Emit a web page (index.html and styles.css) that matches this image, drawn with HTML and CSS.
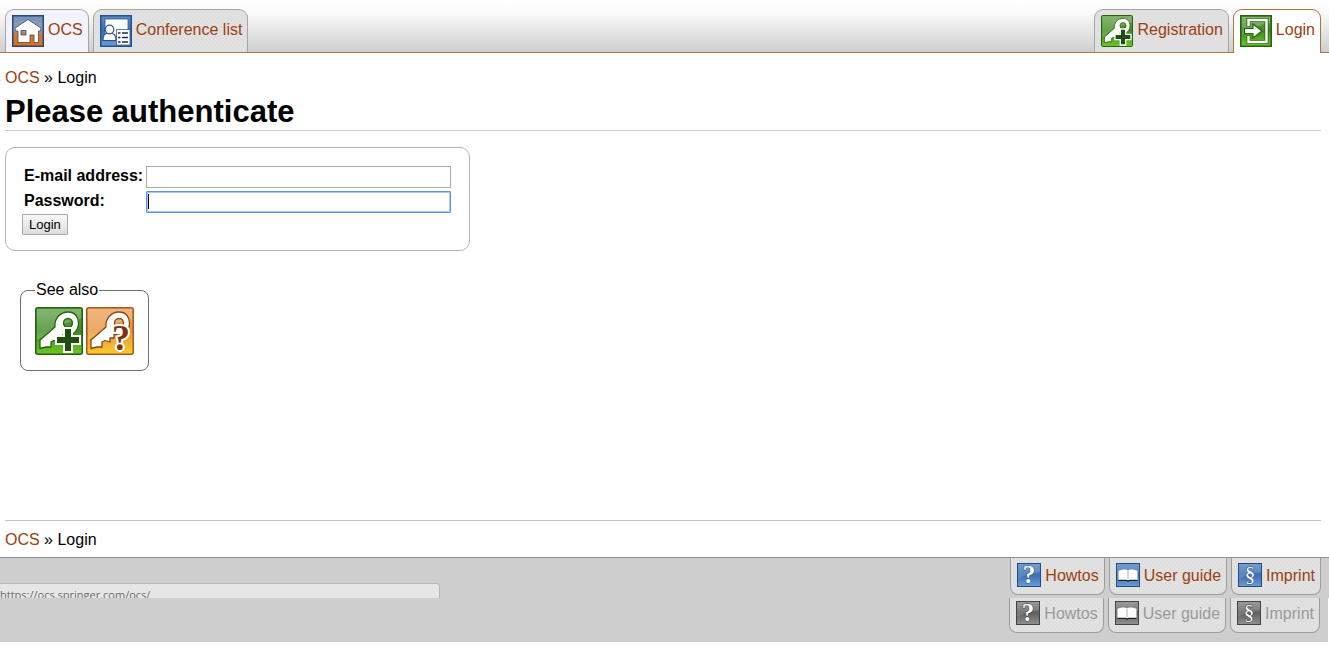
FILE: index.html
```html
<!DOCTYPE html>
<html lang="en">
<head>
<meta charset="utf-8">
<title>OCS - Login</title>
<link rel="stylesheet" href="styles.css">
</head>
<body>
<svg class="defs" aria-hidden="true">
  <defs>
    <linearGradient id="green" x1="0" y1="0" x2="0" y2="1"><stop offset="0" stop-color="#6aa552"/><stop offset="0.5" stop-color="#3f8a22"/><stop offset="1" stop-color="#6cc627"/></linearGradient>
    <linearGradient id="orange" x1="0" y1="0" x2="0" y2="1"><stop offset="0" stop-color="#eda564"/><stop offset="0.5" stop-color="#e6953f"/><stop offset="1" stop-color="#fccb2c"/></linearGradient>
    <linearGradient id="blue" x1="0" y1="0" x2="0" y2="1"><stop offset="0" stop-color="#5d8cc6"/><stop offset="0.5" stop-color="#3c70b3"/><stop offset="1" stop-color="#6c9bd6"/></linearGradient>
    <linearGradient id="gray" x1="0" y1="0" x2="0" y2="1"><stop offset="0" stop-color="#8a8a8a"/><stop offset="0.5" stop-color="#606060"/><stop offset="1" stop-color="#929292"/></linearGradient>
    <linearGradient id="dusk" x1="0" y1="0" x2="0" y2="1"><stop offset="0" stop-color="#6f93c0"/><stop offset="0.45" stop-color="#9a9fae"/><stop offset="0.6" stop-color="#c87a42"/><stop offset="1" stop-color="#ea6c08"/></linearGradient>
    <symbol id="shine" viewBox="0 0 48 48"><path d="M2 2H46V12C34 13 22 20 2 33Z" fill="#fff" opacity="0.2"/></symbol>
    <symbol id="key" viewBox="0 0 48 48">
      <path fill-rule="evenodd" stroke-width="1.3" stroke-linejoin="round" d="M33 5C40 5 43.500 10 43.500 16C43.500 23 39 28 32 28L28 27.500V31H24V35L19 33.500L16 35V40H11L5 41.500V33L20 20C19 12 25 5 33 5ZM33 11.500A4.500 4.500 0 1 0 33 20.500A4.500 4.500 0 1 0 33 11.500Z" fill="#fff"/>
    </symbol>
    <symbol id="key-add" viewBox="0 0 48 48">
      <rect x="0.750" y="0.750" width="46.500" height="46.500" rx="2" fill="url(#green)" stroke="#27630f" stroke-width="1.500"/>
      <use href="#shine"/><use href="#key" stroke="#27630f"/>
      <path d="M30 22H36V30H44V36H36V44H30V36H22V30H30Z" fill="none" stroke="#fff" stroke-width="4"/>
      <path d="M30 22H36V30H44V36H36V44H30V36H22V30H30Z" fill="#1f4f10"/>
    </symbol>
    <symbol id="key-help" viewBox="0 0 48 48">
      <rect x="0.750" y="0.750" width="46.500" height="46.500" rx="2" fill="url(#orange)" stroke="#a8591c" stroke-width="1.500"/>
      <use href="#shine"/><use href="#key" stroke="#8f4310"/>
      <text x="35" y="43" class="key-mark">?</text>
    </symbol>
    <symbol id="home" viewBox="0 0 32 32">
      <rect x="0.750" y="0.750" width="30.500" height="30.500" fill="url(#dusk)" stroke="#24477c" stroke-width="1.500"/>
      <path fill-rule="evenodd" d="M16 4.500L29 13L28.500 16H26.500V27.500H22V20H18V27.500H6V16H3.500L3 13ZM9 15.500V20H14V15.500Z" fill="#fff" stroke="#3a4a66" stroke-width="0.800"/>
    </symbol>
    <symbol id="conference" viewBox="0 0 32 32">
      <rect x="0.750" y="0.750" width="30.500" height="30.500" fill="url(#blue)" stroke="#24518f" stroke-width="1.500"/>
      <path d="M5 4H28V24H5Z" fill="#fff" stroke="#2c5999" stroke-width="0.800"/>
      <path d="M3 25.500C2.500 20 4.500 18.500 9.500 18C14.500 18.500 16 20 16 25.500Z" fill="#fff" stroke="#24518f" stroke-width="1.200"/>
      <circle cx="9.500" cy="14.500" r="4.300" fill="#fff" stroke="#24518f" stroke-width="1.200"/>
      <path d="M16.500 14.500H30V30H16.500Z" fill="#fff" stroke="#2c5999" stroke-width="0.800"/>
      <path d="M18 18H20.500M18 22.500H20.500M18 27H20.500M22 18H28M22 22.500H28M22 27H28" stroke="#222f4a" stroke-width="1.500"/>
    </symbol>
    <symbol id="enter" viewBox="0 0 32 32">
      <rect x="0.750" y="0.750" width="30.500" height="30.500" fill="url(#green)" stroke="#27630f" stroke-width="1.500"/>
      <path d="M2 2H30V8C20 9 12 13 2 20Z" fill="#fff" opacity="0.2"/>
      <path d="M8.500 11.500V5H26.500V27H8.500V20.500" fill="none" stroke="#27630f" stroke-width="4"/>
      <path d="M8.500 11V5H26.500V27H8.500V21" fill="none" stroke="#fff" stroke-width="2.400"/>
      <path d="M4.500 13.500H13V9L22 16L13 23V18.500H4.500Z" fill="#fff" stroke="#27630f" stroke-width="1.200"/>
    </symbol>
    <symbol id="book" viewBox="0 0 24 24">
      <path d="M2.500 8C6 6 10 6 12 7.500C14 6 18 6 21.500 8V17H2.500Z" fill="#fff"/>
      <path d="M12 8V16" stroke="#999" stroke-width="0.800"/>
      <path d="M2.500 17.300H10.500L12 18.300L13.500 17.300H21.500" fill="none" stroke="#222" stroke-width="1.200"/>
    </symbol>
    <symbol id="gloss" viewBox="0 0 24 24"><path d="M1 1H23V9C14 10 8 12 1 16Z" fill="#fff" opacity="0.150"/></symbol>
    <symbol id="help-blue" viewBox="0 0 24 24"><rect x="0.500" y="0.500" width="23" height="23" fill="url(#blue)" stroke="#244a80"/><use href="#gloss"/><text x="12" y="20" class="mark mark-blue">?</text></symbol>
    <symbol id="help-gray" viewBox="0 0 24 24"><rect x="0.500" y="0.500" width="23" height="23" fill="url(#gray)" stroke="#444"/><use href="#gloss"/><text x="12" y="20" class="mark mark-gray">?</text></symbol>
    <symbol id="book-blue" viewBox="0 0 24 24"><rect x="0.500" y="0.500" width="23" height="23" fill="url(#blue)" stroke="#244a80"/><use href="#gloss"/><use href="#book"/></symbol>
    <symbol id="book-gray" viewBox="0 0 24 24"><rect x="0.500" y="0.500" width="23" height="23" fill="url(#gray)" stroke="#444"/><use href="#gloss"/><use href="#book"/></symbol>
    <symbol id="law-blue" viewBox="0 0 24 24"><rect x="0.500" y="0.500" width="23" height="23" fill="url(#blue)" stroke="#244a80"/><use href="#gloss"/><text x="12" y="18" class="mark mark-law mark-blue">§</text></symbol>
    <symbol id="law-gray" viewBox="0 0 24 24"><rect x="0.500" y="0.500" width="23" height="23" fill="url(#gray)" stroke="#444"/><use href="#gloss"/><text x="12" y="18" class="mark mark-law mark-gray">§</text></symbol>
  </defs>
</svg>

<header class="topbar">
  <nav class="tabs">
    <a class="tab tab-home" href="#"><svg class="tab-icon" aria-hidden="true"><use href="#home"/></svg>OCS</a>
    <a class="tab" href="#"><svg class="tab-icon" aria-hidden="true"><use href="#conference"/></svg>Conference list</a>
  </nav>
  <nav class="tabs">
    <a class="tab" href="#"><svg class="tab-icon" aria-hidden="true"><use href="#key-add"/></svg>Registration</a>
    <a class="tab tab-current" href="#"><svg class="tab-icon" aria-hidden="true"><use href="#enter"/></svg>Login</a>
  </nav>
</header>

<main class="content">
  <div class="crumbs"><a href="#">OCS</a> » Login</div>
  <h1 class="title">Please authenticate</h1>
  <form class="login">
    <div class="fields">
      <label for="email">E-mail address:</label>
      <input class="field" id="email" type="text">
      <label for="password">Password:</label>
      <input class="field field-active" id="password" type="password">
    </div>
    <button class="submit" type="button">Login</button>
  </form>
  <fieldset class="see-also">
    <legend>See also</legend>
    <div class="see-links">
      <a href="#" aria-label="Registration"><svg class="see-icon"><use href="#key-add"/></svg></a>
      <a href="#" aria-label="Forgotten password"><svg class="see-icon"><use href="#key-help"/></svg></a>
    </div>
  </fieldset>
</main>
<div class="crumbs crumbs-bottom"><a href="#">OCS</a> » Login</div>

<footer class="footer">
  <div class="foot-row">
    <div class="status">https://ocs.springer.com/ocs/</div>
    <nav class="foot-tabs">
      <a class="foot-tab" href="#"><svg class="foot-icon" aria-hidden="true"><use href="#help-blue"/></svg>Howtos</a>
      <a class="foot-tab" href="#"><svg class="foot-icon" aria-hidden="true"><use href="#book-blue"/></svg>User guide</a>
      <a class="foot-tab" href="#"><svg class="foot-icon" aria-hidden="true"><use href="#law-blue"/></svg>Imprint</a>
    </nav>
  </div>
  <div class="foot-row foot-row-muted">
    <nav class="foot-tabs">
      <a class="foot-tab foot-tab-muted" href="#"><svg class="foot-icon" aria-hidden="true"><use href="#help-gray"/></svg>Howtos</a>
      <a class="foot-tab foot-tab-muted" href="#"><svg class="foot-icon" aria-hidden="true"><use href="#book-gray"/></svg>User guide</a>
      <a class="foot-tab foot-tab-muted" href="#"><svg class="foot-icon" aria-hidden="true"><use href="#law-gray"/></svg>Imprint</a>
    </nav>
  </div>
</footer>
</body>
</html>
```

FILE: styles.css
```css
* { box-sizing: border-box; }

body {
  margin: 0;
  min-height: 100vh;
  padding-bottom: 6px;
  display: flex;
  flex-direction: column;
  background: #fff;
  color: #000;
  font: 16px/20px "Liberation Sans", Arial, sans-serif;
}

a { color: #9c4110; text-decoration: none; }
svg { display: block; flex: none; }
.defs { position: absolute; width: 0; height: 0; }

.topbar {
  display: flex;
  justify-content: space-between;
  padding: 9px 8px 0 5px;
  background: linear-gradient(#fff, #fafafa 25%, #cecece);
  border-bottom: 1px solid #a97f3e;
}
.tabs { display: flex; gap: 4px; }
.tab {
  display: flex;
  align-items: flex-start;
  gap: 4px;
  height: 43px;
  padding: 5px 5px 5px 6px;
  border: 1px solid #a5a5a5;
  border-bottom: 0;
  border-radius: 9px 9px 0 0;
  background: repeating-conic-gradient(#dedede 0 25%, #e2e2e2 0 50%) 0 0 / 4px 4px;
  line-height: 30px;
}
.tab-home { background: #f3f3ff; }
.tab-current {
  height: 44px;
  margin-bottom: -1px;
  background: #fff;
  border-color: #a9763a;
}
.tab-icon { width: 32px; height: 32px; }

.content { flex: 1; padding: 15px 8px 0 5px; }
.crumbs { line-height: 20px; }
.title {
  margin: 6px 0 16px;
  border-bottom: 1px solid #ccc;
  font-size: 31px;
  line-height: 36px;
}

.login {
  width: 465px;
  max-width: 100%;
  padding: 18px 18px 15px 16px;
  border: 1px solid #b4b4b4;
  border-radius: 10px;
}
.fields {
  display: grid;
  grid-template-columns: auto 1fr;
  gap: 3px;
  padding-left: 2px;
  line-height: 19px;
  font-weight: bold;
}
.field {
  width: 100%;
  height: 22px;
  margin: 0;
  padding: 1px 2px;
  border: 1px solid #a9a9a9;
  background: #fff;
  font: 13px "Liberation Sans", Arial, sans-serif;
}
.field-active {
  border-color: #5e93de;
  border-radius: 1px;
  outline: 1px solid #a9c8f5;
  outline-offset: -2px;
  background: linear-gradient(#000, #000) 1px 2px / 1px 15px no-repeat #fff;
}
.submit {
  display: block;
  height: 21px;
  margin: 1px 0 0;
  padding: 0 6px;
  border: 1px solid #a9a9a9;
  border-radius: 1px;
  background: linear-gradient(#f8f8f8, #dddddd);
  color: #000;
  font: 13px "Liberation Sans", Arial, sans-serif;
}

.see-also {
  width: fit-content;
  margin: 29px 0 0 15px;
  padding: 7px 14px 15px;
  border: 1px solid #707070;
  border-radius: 8px;
}
.see-also legend { padding: 0 1px; }
.see-links { display: flex; gap: 3px; }
.see-icon { width: 48px; height: 48px; }
.key-mark {
  font: bold 36px "Liberation Serif", serif;
  text-anchor: middle;
  fill: #7d3208;
  stroke: #fff;
  stroke-width: 4px;
  paint-order: stroke;
}

.crumbs-bottom {
  margin: 0 8px 0 5px;
  padding: 9px 0 7px;
  border-top: 1px solid #c4c4c4;
}

.footer { border-top: 1px solid #8f8f8f; }
.foot-row {
  display: flex;
  justify-content: space-between;
  height: 40px;
  padding-right: 8px;
  background: #cecece;
}
.foot-row-muted {
  justify-content: flex-end;
  height: 44px;
  margin-right: 1px;
}
.status {
  align-self: flex-end;
  width: 440px;
  height: 15px;
  overflow: hidden;
  border: 1px solid #b8b8b8;
  border-width: 1px 1px 0 0;
  border-radius: 0 4px 0 0;
  background: #e6e6e6;
  color: #6c6c6c;
  font: 11px/22px "Open Sans", sans-serif;
}
.foot-tabs { display: flex; align-items: flex-start; gap: 4px; }
.foot-tab {
  display: flex;
  gap: 4px;
  padding: 5px 5px 6px 6px;
  border: 1px solid #9d9d9d;
  border-top: 0;
  border-radius: 0 0 8px 8px;
  background: repeating-conic-gradient(#dedede 0 25%, #e2e2e2 0 50%) 0 0 / 4px 4px;
  line-height: 25px;
}
.foot-tab-muted { padding-top: 3px; color: #9a9a9a; }
.foot-icon { width: 24px; height: 24px; }
.mark {
  font: bold 25px "Liberation Serif", serif;
  text-anchor: middle;
  fill: #fff;
  stroke-width: 1px;
  paint-order: stroke;
}
.mark-law { font-size: 21px; font-weight: normal; }
.mark-blue { stroke: #2b4f82; }
.mark-gray { stroke: #333; }
```
